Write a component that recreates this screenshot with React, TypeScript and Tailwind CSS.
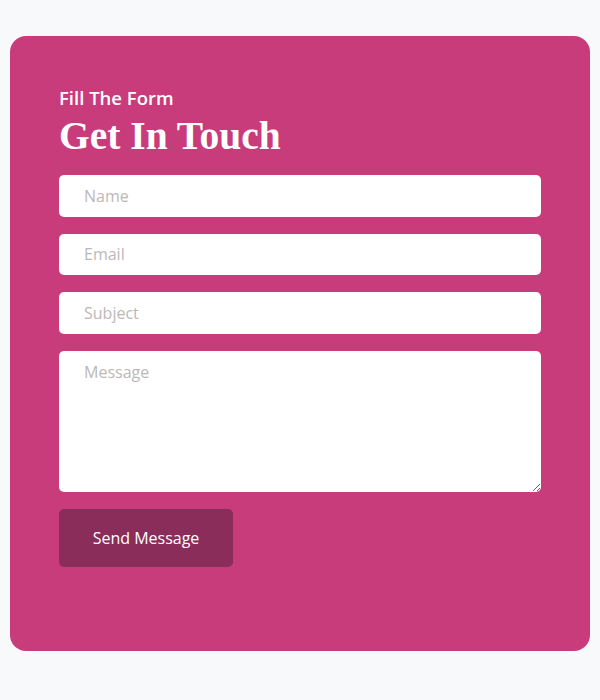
import React from 'react';

function App() {
  return (
    <div className="min-h-screen bg-[#f8f9fa] px-[10px] pt-[36px] pb-[49px]" style={{ fontFamily: '"Open Sans", sans-serif' }}>
      <div className="rounded-[16px] bg-[#c93c7c] px-[49px] pt-[50px] pb-[84px]">
        <p className="text-[18.5px] leading-[24px] font-semibold text-white">Fill The Form</p>
        <h1 className="mt-[4px] text-[39.5px] leading-[44px] font-bold text-white" style={{ fontFamily: '"Liberation Serif", serif' }}>
          Get In Touch
        </h1>
        <form className="mt-[17px] flex flex-col gap-[17px]" onSubmit={(e) => e.preventDefault()}>
          <input type="text" placeholder="Name" className="h-[41.5px] w-full rounded-[5px] bg-white px-[25px] text-[16px] text-gray-700 outline-none placeholder:text-[#bdb8b8]" />
          <input type="email" placeholder="Email" className="h-[41.5px] w-full rounded-[5px] bg-white px-[25px] text-[16px] text-gray-700 outline-none placeholder:text-[#bdb8b8]" />
          <input type="text" placeholder="Subject" className="h-[41.5px] w-full rounded-[5px] bg-white px-[25px] text-[16px] text-gray-700 outline-none placeholder:text-[#bdb8b8]" />
          <textarea placeholder="Message" className="block h-[141px] w-full rounded-[5px] bg-white px-[25px] py-[9px] text-[16px] text-gray-700 outline-none placeholder:text-[#bdb8b8]" />
          <div>
            <button type="submit" className="h-[58px] w-[174px] rounded-[5px] bg-[#8b2d5b] text-[16px] text-white">
              Send Message
            </button>
          </div>
        </form>
      </div>
    </div>
  );
}

export default App;
